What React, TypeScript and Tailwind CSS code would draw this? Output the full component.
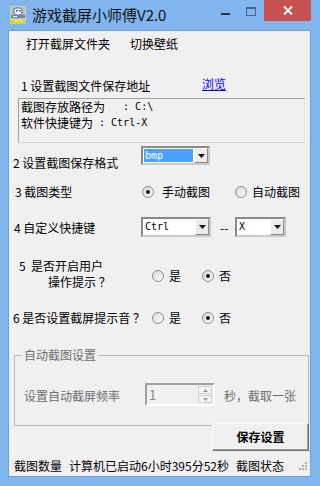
import React from 'react';

const cjk = "font-['Noto_Sans_CJK_SC','Microsoft_YaHei',sans-serif]";
const mono = "font-['DejaVu_Sans_Mono','Liberation_Mono',monospace]";

function Radio({ checked }: { checked?: boolean }) {
    return (
        <span className="flex h-[12px] w-[12px] shrink-0 items-center justify-center rounded-full border border-[#8c8c8c] bg-gradient-to-br from-[#d9d9d9] to-[#fbfbfb]">
            {checked && <span className="h-[4px] w-[4px] rounded-full bg-[#1a1a1a]" />}
        </span>
    );
}

function Arrow() {
    return (
        <svg width="7" height="4" viewBox="0 0 7 4">
            <path d="M0 0h7L3.5 4z" fill="#111" />
        </svg>
    );
}

function Select({ text, w, h, highlight }: { text: string; w: string; h: string; highlight?: boolean }) {
    return (
        <div className={`flex ${w} ${h} shrink-0 border-2 border-t-[#8a8a8a] border-l-[#8a8a8a] border-b-[#c9c9c9] border-r-[#c9c9c9] bg-white`}>
            <div className="flex min-w-0 flex-1 items-stretch p-[1px]">
                <span className={`flex flex-1 items-center pl-[1px] text-[10px] leading-none ${mono} ${highlight ? 'bg-[#4aa0ff] text-white' : 'text-black'}`}>
                    {text}
                </span>
            </div>
            <div className="flex w-[14px] items-center justify-center border border-t-white border-l-white border-b-[#8a8a8a] border-r-[#8a8a8a] bg-[#ececec]">
                <Arrow />
            </div>
        </div>
    );
}

function Grip() {
    const dots = [
        [9, 0], [6, 3], [9, 3], [3, 6], [6, 6], [9, 6],
    ];
    return (
        <svg width="12" height="9" viewBox="0 0 12 9">
            {dots.map(([x, y]) => (
                <rect key={`${x}-${y}`} x={x} y={y} width="2" height="2" fill="#b0b0b0" />
            ))}
        </svg>
    );
}

function AppIcon() {
    return (
        <svg width="16" height="18" viewBox="0 0 16 18">
            <rect x="0" y="0" width="16" height="18" fill="#d8d0a0" />
            <rect x="1" y="1" width="14" height="12" fill="#aebfd6" />
            <rect x="4" y="2" width="8" height="7" rx="2" fill="#eef2f8" stroke="#5a6b85" strokeWidth="1" />
            <rect x="6" y="4" width="1.5" height="1.5" fill="#33445e" />
            <rect x="9" y="4" width="1.5" height="1.5" fill="#33445e" />
            <rect x="1" y="9" width="14" height="3" fill="#6d88b3" />
            <rect x="3" y="10" width="4" height="1" fill="#ffffff" />
            <rect x="0" y="14" width="16" height="4" fill="#c9d84a" />
            <rect x="4" y="14" width="8" height="2" fill="#f2e23c" />
        </svg>
    );
}

export default function App() {
    return (
        <div className={`flex h-[486px] w-[320px] flex-col overflow-hidden bg-[#80b5ee] text-black ${cjk}`}>
            {/* ── Title bar ── */}
            <div className="flex h-[31px] shrink-0 items-start">
                <div className="ml-[10px] mt-[6px]">
                    <AppIcon />
                </div>
                <span className="ml-[6px] mt-[6px] text-[15px] leading-[18px] text-[#111]">游戏截屏小师傅V2.0</span>
                <div className="ml-auto mr-[9px] flex h-[21px]">
                    <div className="flex w-[26px] justify-center pt-[13px]">
                        <span className="h-[2px] w-[9px] bg-[#333]" />
                    </div>
                    <div className="flex w-[26px] justify-center pt-[7px]">
                        <span className="h-[9px] w-[10px] border border-t-2 border-[#46658c]" />
                    </div>
                    <div className="flex w-[47px] items-center justify-center bg-[#c75050]">
                        <svg width="10" height="9" viewBox="0 0 10 9">
                            <path d="M1 0.5l8 8M9 0.5l-8 8" stroke="#fff" strokeWidth="2" />
                        </svg>
                    </div>
                </div>
            </div>

            {/* ── Client area ── */}
            <div className="ml-[9px] flex h-[445px] w-[301px] shrink-0 flex-col bg-[#f0f0f0] text-[12px] leading-[16px] shadow-[0_0_0_1px_#6f9fd9]">
                {/* menu */}
                <div className="flex h-[26px] shrink-0 items-center">
                    <span className="ml-[17px]">打开截屏文件夹</span>
                    <span className="ml-[20px]">切换壁纸</span>
                </div>

                {/* 1 */}
                <div className="flex h-[41px] shrink-0 items-start">
                    <span className="ml-[12px] mt-[21px] w-[181px]">1 设置截图文件保存地址</span>
                    <span className="mt-[19px] text-[#0000ff] underline">浏览</span>
                </div>

                {/* path box */}
                <div className="ml-[9px] h-[45px] w-[287px] shrink-0 border border-t-[#a0a0a0] border-l-[#a0a0a0] border-b-[#d6d6d6] border-r-[#e8e8e8] pl-[2px]">
                    <div className="flex h-[16px] items-center whitespace-pre leading-[16px]">
                        <span>截图存放路径为</span>
                        <span className={`${mono} text-[10px] leading-[16px]`}>   : C:\</span>
                    </div>
                    <div className="flex h-[16px] items-center whitespace-pre leading-[16px]">
                        <span>软件快捷键为</span>
                        <span className={`${mono} text-[10px] leading-[16px]`}> : Ctrl-X</span>
                    </div>
                </div>

                {/* 2 */}
                <div className="flex h-[36px] shrink-0 items-start">
                    <span className="ml-[4px] mt-[12px] w-[128px]">2 设置截图保存格式</span>
                    <div className="mt-[3px]">
                        <Select text="bmp" w="w-[69px]" h="h-[19px]" highlight />
                    </div>
                </div>

                {/* 3 */}
                <div className="flex h-[30px] shrink-0 items-start">
                    <span className="ml-[6px] mt-[5px] w-[127px]">3 截图类型</span>
                    <div className="mt-[7px]">
                        <Radio checked />
                    </div>
                    <span className="ml-[8px] mt-[5px]">手动截图</span>
                    <div className="ml-[25px] mt-[7px]">
                        <Radio />
                    </div>
                    <span className="ml-[5px] mt-[5px]">自动截图</span>
                </div>

                {/* 4 */}
                <div className="flex h-[40px] shrink-0 items-start">
                    <span className="ml-[5px] mt-[11px] w-[127px]">4 自定义快捷键</span>
                    <div className="mt-[8px]">
                        <Select text="Ctrl" w="w-[70px]" h="h-[20px]" />
                    </div>
                    <span className="mt-[11px] w-[24px] pl-[9px]">--</span>
                    <div className="mt-[8px]">
                        <Select text="X" w="w-[51px]" h="h-[20px]" />
                    </div>
                </div>

                {/* 5 */}
                <div className="flex h-[47px] shrink-0 items-start">
                    <div className="ml-[10px] mt-[9px] w-[133px]">
                        <div className="whitespace-pre">5  是否开启用户</div>
                        <div className="pl-[29px]">操作提示 ？</div>
                    </div>
                    <div className="mt-[21px]">
                        <Radio />
                    </div>
                    <span className="ml-[5px] mt-[19px]">是</span>
                    <div className="ml-[21px] mt-[21px]">
                        <Radio checked />
                    </div>
                    <span className="ml-[5px] mt-[19px]">否</span>
                </div>

                {/* 6 */}
                <div className="flex h-[35px] shrink-0 items-start">
                    <span className="ml-[4px] mt-[14px] w-[139px]">6 是否设置截屏提示音 ？</span>
                    <div className="mt-[16px]">
                        <Radio />
                    </div>
                    <span className="ml-[5px] mt-[14px]">是</span>
                    <div className="ml-[21px] mt-[16px]">
                        <Radio checked />
                    </div>
                    <span className="ml-[5px] mt-[14px]">否</span>
                </div>

                {/* auto group */}
                <fieldset className="ml-[5px] mt-[16px] h-[79px] w-[295px] shrink-0 border border-[#b8b8b8] text-[#6d6d6d]">
                    <legend className="ml-[7px] px-[2px]">自动截图设置</legend>
                    <div className="flex items-start">
                        <span className="ml-[9px] mt-[25px] w-[121px]">设置自动截屏频率</span>
                        <div className="mt-[20px] flex h-[23px] w-[70px] border-2 border-t-[#a0a0a0] border-l-[#a0a0a0] border-b-white border-r-white bg-[#f0f0f0]">
                            <span className="flex flex-1 items-center pl-[2px] text-[13px] text-[#8a8a8a]">1</span>
                            <div className="flex w-[15px] flex-col gap-[1px] py-[1px] pr-[1px]">
                                <div className="flex flex-1 items-center justify-center border border-[#cfcfcf] bg-[#f4f4f4]">
                                    <svg width="5" height="3" viewBox="0 0 5 3"><path d="M2.5 0L5 3H0z" fill="#9a9a9a" /></svg>
                                </div>
                                <div className="flex flex-1 items-center justify-center border border-[#cfcfcf] bg-[#f4f4f4]">
                                    <svg width="5" height="3" viewBox="0 0 5 3"><path d="M0 0h5L2.5 3z" fill="#9a9a9a" /></svg>
                                </div>
                            </div>
                        </div>
                        <span className="ml-[9px] mt-[25px]">秒，截取一张</span>
                    </div>
                </fieldset>

                {/* save */}
                <button className="relative z-10 -mt-[3px] ml-auto mr-[1px] h-[28px] w-[97px] shrink-0 border border-t-[#fafafa] border-l-[#fafafa] border-b-[#6e6e6e] border-r-[#6e6e6e] bg-[#f0f0f0] text-[12px] font-bold shadow-[inset_-1px_-1px_0_#a0a0a0]">
                    保存设置
                </button>

                {/* status bar */}
                <div className="flex h-[25px] shrink-0 items-start">
                    <span className="ml-[5px] mt-[7px]">截图数量</span>
                    <span className="ml-[7px] mt-[7px]">计算机已启动6小时395分52秒</span>
                    <span className="ml-[7px] mt-[7px]">截图状态</span>
                    <div className="ml-auto mr-[2px] mt-[11px]">
                        <Grip />
                    </div>
                </div>
            </div>
        </div>
    );
}
